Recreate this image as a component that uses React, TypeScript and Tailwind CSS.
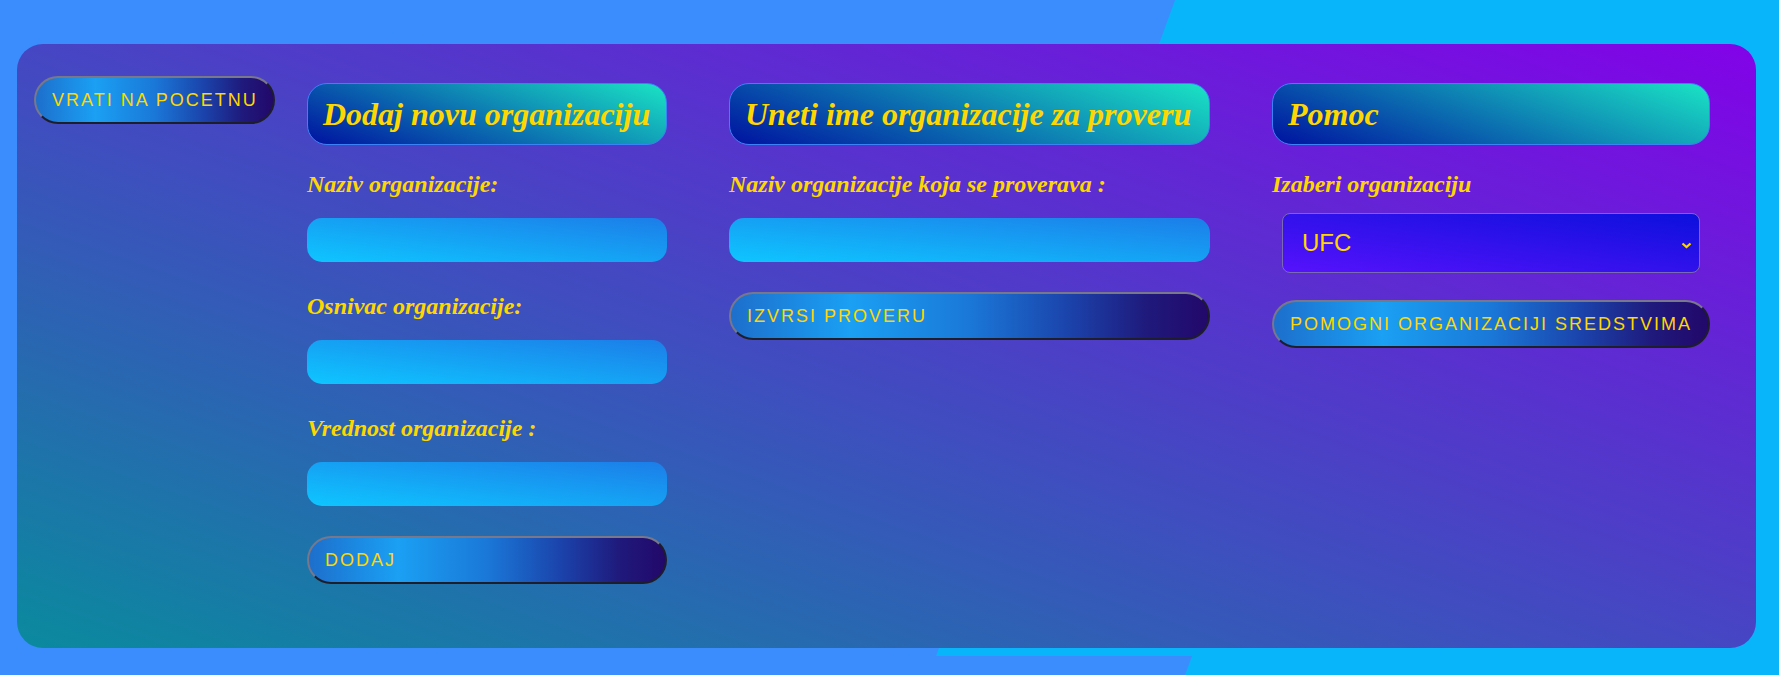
import { useState } from "react";

const serif = "[font-family:'Liberation_Serif','Times_New_Roman',serif]";
const sans = "[font-family:'Liberation_Sans',Arial,sans-serif]";

// pill buttons share the same look
const pillBtn =
  "flex h-[48px] items-center whitespace-nowrap rounded-full border-2 border-t-[#78788a] border-l-[#78788a] border-r-[#1e1e2a] border-b-[#1e1e2a] bg-[linear-gradient(to_right,#1d6fcc,#1aa0f4_25%,#1a78d8_50%,#1b40a8_72%,#1f1a7c_87%,#22086a)] pl-[16px] text-left text-[18px] tracking-[2px] text-[#ffd700] [font-family:'Liberation_Sans',Arial,sans-serif]";

const headingBox =
  "flex h-[62px] items-center rounded-[20px] border border-[#3b82f6] bg-[linear-gradient(20deg,#0012a0,#1ae4c4)] px-[15px]";

const headingText = `whitespace-nowrap text-[32px] font-bold italic leading-none text-[#ffd700] ${serif}`;
const labelText = `whitespace-nowrap text-[24px] font-bold italic leading-[28px] text-[#ffd700] ${serif}`;

const inputCls =
  "h-[44px] w-full rounded-[15px] border-0 bg-[linear-gradient(to_top_right,#0ec6ff,#1c7de9)] px-4 text-[18px] text-[#ffd700] outline-none";

export default function App() {
  const [naziv, setNaziv] = useState("");
  const [osnivac, setOsnivac] = useState("");
  const [vrednost, setVrednost] = useState("");
  const [provera, setProvera] = useState("");
  const [org, setOrg] = useState("UFC");

  return (
    <div className="relative h-[675px] w-full overflow-hidden bg-[#3b8dfd]">
      {/* pozadinski oblik desno */}
      <div className="absolute inset-0 bg-[#08b4fa] [clip-path:polygon(1175px_0,100%_0,100%_100%,1185px_100%,1192px_656px,936px_656px)]" />

      <div className="relative pl-[17px] pr-[23px] pt-[44px]">
        <div className="flex h-[604px] items-start rounded-[26px] bg-[linear-gradient(to_top_right,#0a8a9e,#8202e8)] pl-[17px] pt-[32px]">
          <button className={`${pillBtn} w-[241px]`}>VRATI NA POCETNU</button>

          <div className="ml-[32px] mt-[7px] flex items-start gap-[62px]">
            {/* Dodaj */}
            <div className="flex w-[360px] flex-col">
              <div className={headingBox}>
                <h2 className={headingText}>Dodaj novu organizaciju</h2>
              </div>
              <label className={`${labelText} mt-[25px]`}>Naziv organizacije:</label>
              <input className={`${inputCls} mt-[20px]`} value={naziv} onChange={(e) => setNaziv(e.target.value)} />
              <label className={`${labelText} mt-[30px]`}>Osnivac organizacije:</label>
              <input className={`${inputCls} mt-[20px]`} value={osnivac} onChange={(e) => setOsnivac(e.target.value)} />
              <label className={`${labelText} mt-[30px]`}>Vrednost organizacije :</label>
              <input className={`${inputCls} mt-[20px]`} value={vrednost} onChange={(e) => setVrednost(e.target.value)} />
              <button className={`${pillBtn} mt-[30px] w-full`}>DODAJ</button>
            </div>

            {/* Provera */}
            <div className="flex w-[481px] flex-col">
              <div className={headingBox}>
                <h2 className={headingText}>Uneti ime organizacije za proveru</h2>
              </div>
              <label className={`${labelText} mt-[25px]`}>Naziv organizacije koja se proverava :</label>
              <input className={`${inputCls} mt-[20px]`} value={provera} onChange={(e) => setProvera(e.target.value)} />
              <button className={`${pillBtn} mt-[30px] w-full`}>IZVRSI PROVERU</button>
            </div>

            {/* Pomoc */}
            <div className="flex w-[438px] flex-col">
              <div className={headingBox}>
                <h2 className={headingText}>Pomoc</h2>
              </div>
              <label className={`${labelText} mt-[25px]`}>Izaberi organizaciju</label>
              <div className="relative mx-[10px] mt-[15px]">
                <select
                  value={org}
                  onChange={(e) => setOrg(e.target.value)}
                  className={`h-[60px] w-full appearance-none rounded-[8px] border border-[#7a6ab4] bg-[linear-gradient(to_top_right,#5612fc,#0c10dc)] pl-[19px] text-[24px] text-[#ffd700] outline-none ${sans}`}
                >
                  <option>UFC</option>
                  <option>WWF</option>
                  <option>Crveni krst</option>
                </select>
                <svg
                  className="pointer-events-none absolute right-[8px] top-[29px]"
                  width="11"
                  height="7"
                  viewBox="0 0 11 7"
                  fill="none"
                >
                  <path d="M1.5 1.5 L5.5 5 L9.5 1.5" stroke="#ffd700" strokeWidth="2.2" />
                </svg>
              </div>
              <button className={`${pillBtn} mt-[27px] w-full`}>POMOGNI ORGANIZACIJI SREDSTVIMA</button>
            </div>
          </div>
        </div>
      </div>
    </div>
  );
}
